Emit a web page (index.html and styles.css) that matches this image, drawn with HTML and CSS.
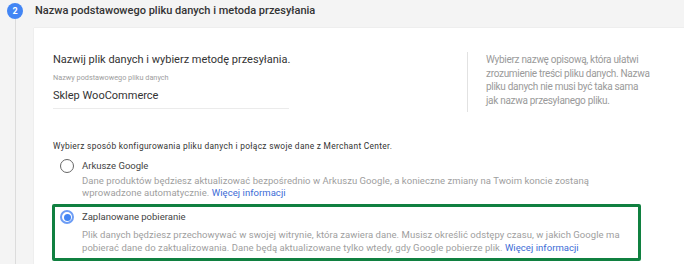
FILE: index.html
```html
<!DOCTYPE html>
<html lang="pl">
<head>
<meta charset="utf-8">
<link rel="stylesheet" href="styles.css">
</head>
<body>
<div class="step">
  <div class="rail">
    <div class="num">2</div>
    <div class="line"></div>
  </div>
  <div class="main">
    <div class="head">Nazwa podstawowego pliku danych i metoda przesyłania</div>
    <div class="card">
      <div class="top">
        <div class="field">
          <div class="heading">Nazwij plik danych i wybierz metodę przesyłania.</div>
          <div class="label">Nazwy podstawowego pliku danych</div>
          <div class="value">Sklep WooCommerce</div>
        </div>
        <div class="hint">Wybierz nazwę opisową, która ułatwi<br>zrozumienie treści pliku danych. Nazwa<br>pliku danych nie musi być taka sama<br>jak nazwa przesyłanego pliku.</div>
      </div>
      <div class="intro">Wybierz sposób konfigurowania pliku danych i połącz swoje dane z Merchant Center.</div>
      <div class="option first">
        <div class="opt-row"><span class="radio"></span><span class="opt-title">Arkusze Google</span></div>
        <div class="desc">Dane produktów będziesz aktualizować bezpośrednio w Arkuszu Google, a konieczne zmiany na Twoim koncie zostaną<br>wprowadzone automatycznie. <a class="link">Więcej informacji</a></div>
      </div>
      <div class="option selected">
        <div class="opt-row"><span class="radio on"></span><span class="opt-title">Zaplanowane pobieranie</span></div>
        <div class="desc">Plik danych będziesz przechowywać w swojej witrynie, która zawiera dane. Musisz określić odstępy czasu, w jakich Google ma<br>pobierać dane do zaktualizowania. Dane będą aktualizowane tylko wtedy, gdy Google pobierze plik. <a class="link">Więcej informacji</a></div>
      </div>
    </div>
  </div>
</div>
</body>
</html>
```
FILE: styles.css
```css
html, body {
  margin: 0;
  padding: 0;
  background: #f4f4f4;
  font-family: Roboto, "Liberation Sans", sans-serif;
  color: #333;
  overflow: hidden;
}
.step {
  display: flex;
  height: 264px;
}
.rail {
  width: 30px;
  display: flex;
  flex-direction: column;
  align-items: center;
  padding-top: 3px;
  box-sizing: border-box;
}
.num {
  width: 16px;
  height: 16px;
  border-radius: 50%;
  background: #4285f4;
  color: #fff;
  font-size: 9px;
  font-weight: 700;
  line-height: 16px;
  text-align: center;
}
.line {
  flex: 1;
  width: 1px;
  background: #dcdcdc;
}
.main {
  flex: 1;
  margin-left: 4px;
  display: flex;
  flex-direction: column;
}
.head {
  height: 28px;
  padding-left: 1px;
  font-size: 11px;
  font-weight: 500;
  line-height: 22px;
  color: #333;
  box-sizing: border-box;
  white-space: nowrap;
}
.card {
  flex: 1;
  background: #fff;
  padding: 24px 0 0 19px;
  box-shadow: 0 0 1px rgba(0,0,0,0.15);
}
.top {
  display: flex;
}
.field {
  width: 236px;
  flex: none;
}
.heading {
  font-size: 11px;
  line-height: 16px;
  color: #333;
  white-space: nowrap;
}
.label {
  margin-top: 4px;
  font-size: 7.3px;
  line-height: 12px;
  color: #9e9e9e;
}
.value {
  margin-top: 4px;
  font-size: 11px;
  line-height: 16px;
  color: #333;
  padding-bottom: 4px;
  border-bottom: 1px solid #ebebeb;
}
.hint {
  margin-left: 178px;
  height: 60px;
  box-sizing: border-box;
  padding: 1px 0 0 18px;
  border-left: 1px solid #e2e2e2;
  font-size: 10px;
  letter-spacing: -0.3px;
  line-height: 13.5px;
  color: #9a9a9a;
  white-space: nowrap;
}
.intro {
  margin-top: 28px;
  font-size: 8.4px;
  letter-spacing: 0.3px;
  line-height: 12px;
  color: #333;
  white-space: nowrap;
}
.option {
  width: 589px;
  box-sizing: border-box;
  margin-left: -1px;
  padding: 3px 0 4px 5px;
  border: 3px solid transparent;
  border-radius: 2px;
}
.option.first {
  padding: 4px 0 2px 5px;
}
.option.selected {
  border-color: #108040;
}
.opt-row {
  display: flex;
  align-items: center;
  gap: 8px;
  height: 14px;
}
.radio {
  width: 14px;
  height: 14px;
  box-sizing: border-box;
  border: 1.5px solid #666;
  border-radius: 50%;
  display: flex;
  align-items: center;
  justify-content: center;
}
.radio.on {
  border: 2px solid #6d9df5;
}
.radio.on::after {
  content: "";
  width: 7px;
  height: 7px;
  border-radius: 50%;
  background: #4285f4;
}
.opt-title {
  font-size: 9.5px;
  line-height: 14px;
  color: #444;
}
.desc {
  margin-top: 4px;
  margin-left: 22px;
  font-size: 9.5px;
  line-height: 13px;
  color: #9e9e9e;
  letter-spacing: 0.05px;
  white-space: nowrap;
}
.first .desc {
  margin-top: 2px;
  line-height: 12px;
}
.link {
  color: #3b6bd6;
}
```
